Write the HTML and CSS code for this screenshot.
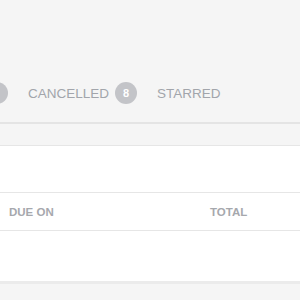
FILE: index.html
```html
<!DOCTYPE html>
<html>
<head>
<meta charset="utf-8">
<link rel="stylesheet" href="styles.css">
</head>
<body>
<div class="page">
  <header class="top">
    <nav class="tabs">
      <a class="tab"><span class="badge"></span></a>
      <a class="tab">CANCELLED <span class="badge">8</span></a>
      <a class="tab">STARRED</a>
    </nav>
  </header>
  <div class="gap"></div>
  <section class="card">
    <div class="toolbar"></div>
    <div class="thead">
      <div class="th due">DUE ON</div>
      <div class="th total">TOTAL</div>
    </div>
    <div class="tbody"></div>
  </section>
</div>
</body>
</html>
```
FILE: styles.css
```css
html, body {
  margin: 0;
  padding: 0;
  background: #f5f5f5;
  font-family: "Liberation Sans", Arial, sans-serif;
}
.page {
  width: 300px;
  height: 300px;
  overflow: hidden;
}
.top {
  height: 124px;
  border-bottom: 2px solid #e4e4e4;
  box-sizing: border-box;
  display: flex;
  align-items: flex-end;
}
.tabs {
  display: flex;
  align-items: center;
  gap: 20px;
  margin-left: -14px;
  height: 40px;
  margin-bottom: 9px;
  white-space: nowrap;
}
.tab {
  display: flex;
  align-items: center;
  gap: 6px;
  font-size: 13.5px;
  color: #a2a5ab;
}
.badge {
  display: inline-flex;
  align-items: center;
  justify-content: center;
  width: 22px;
  height: 22px;
  border-radius: 50%;
  background: #c3c4c8;
  color: #fff;
  font-size: 11px;
  font-weight: bold;
}
.gap {
  height: 21px;
}
.card {
  background: #fff;
  border-top: 1px solid #e6e6e6;
  border-bottom: 3px solid #ebebeb;
}
.toolbar {
  height: 46px;
  border-bottom: 1px solid #e6e6e6;
}
.thead {
  height: 37px;
  display: flex;
  align-items: center;
  border-bottom: 1px solid #e6e6e6;
  font-size: 11.5px;
  font-weight: bold;
  color: #a6a8ad;
}
.th.due {
  padding-left: 9px;
  width: 201px;
}
.tbody {
  height: 50px;
}
```
